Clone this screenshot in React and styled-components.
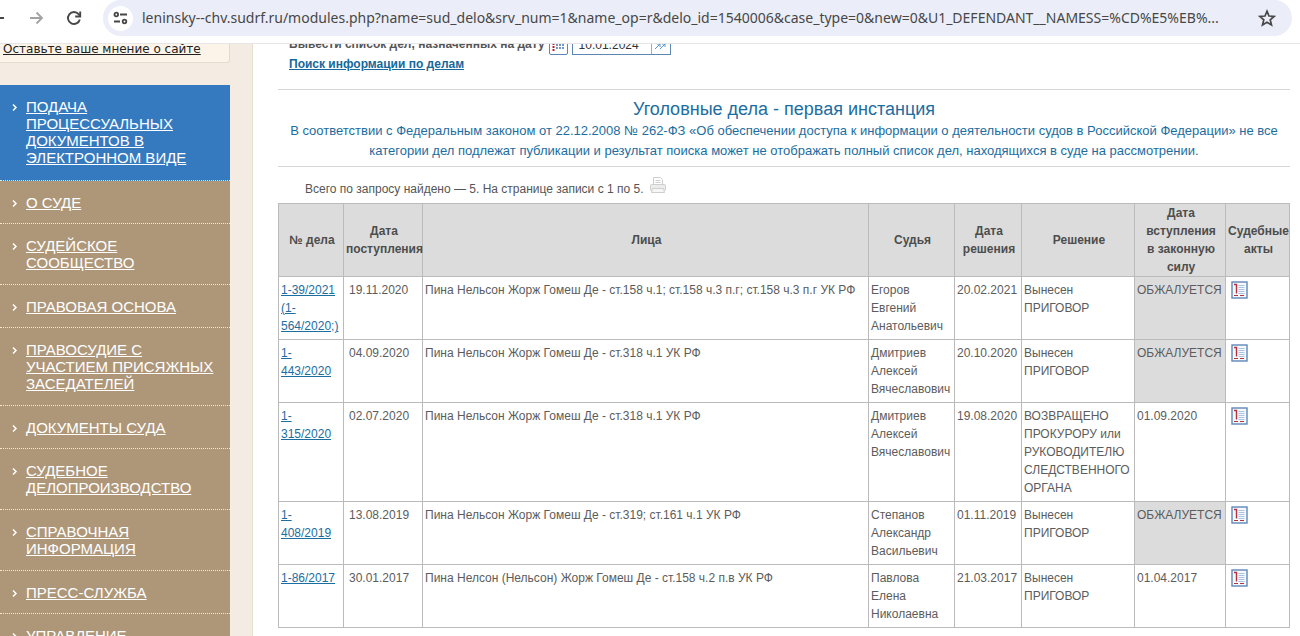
import React from "react";
import styled, { createGlobalStyle } from "styled-components";

const GlobalStyle = createGlobalStyle`
  * { box-sizing: border-box; }
  body {
    margin: 0;
    background: #fff;
    color: #555;
    font-family: "Liberation Sans", Arial, sans-serif;
    font-size: 12px;
    line-height: 18px;
  }
`;

const Window = styled.div`
  height: 100vh;
  display: flex;
  flex-direction: column;
  overflow: hidden;
`;

const Toolbar = styled.header`
  flex: none;
  height: 44px;
  display: flex;
  align-items: flex-start;
  padding-right: 8px;
  background: #fff;
  border-bottom: 1px solid #e6e6e6;
  position: relative;
  z-index: 1;
`;

const NavButtons = styled.div`
  display: flex;
  align-items: center;
  gap: 18px;
  width: 103px;
  height: 36px;
  margin-left: -12px;
  margin-right: 12px;
`;

const IconButton = styled.button`
  flex: none;
  display: flex;
  padding: 0;
  border: 0;
  background: none;
  color: ${(p) => p.$color || "#474747"};
`;

const AddressBar = styled.div`
  flex: 1;
  min-width: 0;
  height: 36px;
  display: flex;
  align-items: center;
  gap: 9px;
  padding: 0 16px 0 5px;
  border-radius: 18px;
  background: #ebeef8;
`;

const SiteInfo = styled(IconButton)`
  width: 25px;
  height: 25px;
  align-items: center;
  justify-content: center;
  border-radius: 50%;
  background: #fff;
`;

const Address = styled.input`
  flex: 1;
  min-width: 0;
  padding: 0;
  border: 0;
  outline: 0;
  background: none;
  color: #474747;
  font: 14px/24px "Noto Sans", "Open Sans", sans-serif;
  text-overflow: ellipsis;
`;

const Viewport = styled.div`
  flex: 1;
  min-height: 0;
  overflow: hidden;
  background: #fff;
`;

const Scrolled = styled.div`
  display: flex;
  align-items: stretch;
  margin-top: -15px;
`;

const Sidebar = styled.aside`
  flex: none;
  width: 253px;
  padding-right: 22px;
  background: #f4ebe2;
  border-right: 1px solid #eaded3;
`;

const Feedback = styled.div`
  height: 34px;
  padding: 11px 3px 0;
  margin-bottom: 22px;
  background: #fcf4e8;
  border: solid #e4dacf;
  border-width: 0 1px 1px 0;
  border-radius: 0 0 3px 0;
`;

const FeedbackLink = styled.a`
  color: #222;
  font-family: "DejaVu Sans", Verdana, sans-serif;
  font-size: 12px;
  white-space: nowrap;
`;

const Menu = styled.ul`
  margin: 0;
  padding: 0;
  list-style: none;
`;

const MenuItem = styled.li`
  display: flex;
  align-items: flex-start;
  gap: 8px;
  padding: 13px 12px ${(p) => (p.$active ? 14 : p.$compact ? 12 : 13)}px;
  background: ${(p) => (p.$active ? "#357abf" : "#ae9779")};
  border-bottom: 1px dotted #f0e8dc;
  color: #fff;
`;

const Arrow = styled.svg`
  flex: none;
  width: 6px;
  height: 17px;
`;

const MenuLink = styled.a`
  color: #fff;
  font-size: 15px;
  line-height: 17px;
  white-space: pre-line;
`;

const Main = styled.main`
  flex: 1;
  min-width: 0;
  padding: 2px 10px 8px 25px;
`;

const DateRow = styled.form`
  display: flex;
  align-items: flex-end;
  height: 24px;
  padding-left: 11px;
  gap: 4px;
`;

const DateLabel = styled.label`
  font-weight: bold;
  line-height: 22px;
`;

const CalendarButton = styled(IconButton)`
  width: 19px;
  height: 19px;
  align-items: center;
  justify-content: center;
  border: 1px solid #5d86b4;
  border-radius: 2px;
  background: #fff;
`;

const DateField = styled.div`
  display: flex;
  height: 21px;
  border: 1px solid #5d86b4;
`;

const DateInput = styled.input`
  width: 78px;
  padding: 0 0 0 6px;
  border: 0;
  outline: 0;
  color: #333;
  font: 12px/18px "Liberation Sans", Arial, sans-serif;
`;

const GoButton = styled(IconButton)`
  width: 19px;
  align-items: center;
  justify-content: center;
  border-left: 1px solid #8fb0d3;
`;

const SearchLink = styled.a`
  display: block;
  width: max-content;
  margin-left: 11px;
  color: #15689b;
  font-weight: bold;
`;

const Notice = styled.section`
  margin-top: 16px;
  padding: 8px 0 5px;
  border: solid #d6d6d6;
  border-width: 1px 0;
  color: #1c6da0;
  text-align: center;
`;

const Title = styled.h1`
  margin: 0;
  font-size: 18px;
  line-height: 23px;
  font-weight: normal;
`;

const Law = styled.p`
  margin: 0 12px;
  font-size: 13px;
  line-height: 20px;
`;

const Summary = styled.div`
  display: flex;
  align-items: center;
  gap: 5px;
  height: 36px;
  padding: 8px 0 0 27px;
`;

const Printer = styled(IconButton)`
  margin-bottom: 8px;
`;

const Cases = styled.table`
  width: 100%;
  table-layout: fixed;
  border-collapse: collapse;
  border: 1px solid #bbb;
`;

const Col = styled.col`
  width: ${(p) => (p.$w ? `${p.$w}px` : "auto")};
`;

const Th = styled.th`
  padding: 0 0 0 2px;
  border: 1px solid #bbb;
  background: #dcdcdc;
  color: #4d4d4d;
  font-weight: bold;
  text-align: center;
  vertical-align: middle;
  white-space: pre-line;
`;

const Td = styled.td`
  padding: 4px 0 4px ${(p) => p.$indent || 2}px;
  border: 1px solid #bbb;
  background: ${(p) => (p.$muted ? "#dcdcdc" : "#fff")};
  color: #5c5c5c;
  vertical-align: top;
  white-space: pre-line;
`;

const CaseLink = styled.a`
  color: #1c6da0;
`;

const ActIcon = () => (
  <svg width="17" height="18" viewBox="0 0 17 18" aria-hidden="true">
    <rect x="1" y="1" width="15" height="16" fill="#f6f9fd" stroke="#5f88b8" strokeWidth="1.400" />
    <path d="M7.500 4.500h6M7.500 6.500h6M7.500 8.500h6M7.500 10.500h6M7.500 12.500h6" stroke="#a9c3e3" />
    <path d="M3 3.500h2.500V12.500" fill="none" stroke="#b5303a" strokeWidth="1.400" />
    <path d="M3 14.500h4M9 14.500h4" stroke="#b5303a" />
  </svg>
);

const menu = [
  { text: "ПОДАЧА\nПРОЦЕССУАЛЬНЫХ\nДОКУМЕНТОВ В\nЭЛЕКТРОННОМ ВИДЕ", active: true },
  { text: "О СУДЕ" },
  { text: "СУДЕЙСКОЕ\nСООБЩЕСТВО" },
  { text: "ПРАВОВАЯ ОСНОВА" },
  { text: "ПРАВОСУДИЕ С\nУЧАСТИЕМ ПРИСЯЖНЫХ\nЗАСЕДАТЕЛЕЙ" },
  { text: "ДОКУМЕНТЫ СУДА" },
  { text: "СУДЕБНОЕ\nДЕЛОПРОИЗВОДСТВО" },
  { text: "СПРАВОЧНАЯ\nИНФОРМАЦИЯ" },
  { text: "ПРЕСС-СЛУЖБА" },
  { text: "УПРАВЛЕНИЕ" },
];

const columns = [
  { title: "№ дела", w: 65 },
  { title: "Дата\nпоступления", w: 79 },
  { title: "Лица" },
  { title: "Судья", w: 86 },
  { title: "Дата\nрешения", w: 67 },
  { title: "Решение", w: 113 },
  { title: "Дата\nвступления\nв законную\nсилу", w: 91 },
  { title: "Судебные\nакты", w: 64 },
];

const cases = [
  {
    id: "1-39/2021\n(1-\n564/2020;)",
    received: "19.11.2020",
    persons: "Пина Нельсон Жорж Гомеш Де - ст.158 ч.1; ст.158 ч.3 п.г; ст.158 ч.3 п.г УК РФ",
    judge: "Егоров Евгений Анатольевич",
    decided: "20.02.2021",
    decision: "Вынесен ПРИГОВОР",
  },
  {
    id: "1-\n443/2020",
    received: "04.09.2020",
    persons: "Пина Нельсон Жорж Гомеш Де - ст.318 ч.1 УК РФ",
    judge: "Дмитриев Алексей Вячеславович",
    decided: "20.10.2020",
    decision: "Вынесен ПРИГОВОР",
  },
  {
    id: "1-\n315/2020",
    received: "02.07.2020",
    persons: "Пина Нельсон Жорж Гомеш Де - ст.318 ч.1 УК РФ",
    judge: "Дмитриев Алексей Вячеславович",
    decided: "19.08.2020",
    decision: "ВОЗВРАЩЕНО ПРОКУРОРУ или РУКОВОДИТЕЛЮ СЛЕДСТВЕННОГО ОРГАНА",
    effective: "01.09.2020",
  },
  {
    id: "1-\n408/2019",
    received: "13.08.2019",
    persons: "Пина Нельсон Жорж Гомеш Де - ст.319; ст.161 ч.1 УК РФ",
    judge: "Степанов Александр Васильевич",
    decided: "01.11.2019",
    decision: "Вынесен ПРИГОВОР",
  },
  {
    id: "1-86/2017",
    received: "30.01.2017",
    persons: "Пина Нелсон (Нельсон) Жорж Гомеш Де - ст.158 ч.2 п.в УК РФ",
    judge: "Павлова\nЕлена\nНиколаевна",
    decided: "21.03.2017",
    decision: "Вынесен ПРИГОВОР",
    effective: "01.04.2017",
  },
];

export default function App() {
  return (
    <Window>
      <GlobalStyle />
      <Toolbar>
        <NavButtons>
          <IconButton aria-label="Назад">
            <svg width="20" height="20" viewBox="0 0 20 20" fill="none" stroke="currentColor" strokeWidth="1.8">
              <path d="M16 10H4M10 4l-6 6 6 6" />
            </svg>
          </IconButton>
          <IconButton aria-label="Вперёд" $color="#a3a3a3">
            <svg width="20" height="20" viewBox="0 0 20 20" fill="none" stroke="currentColor" strokeWidth="1.8">
              <path d="M4 10h12M10.500 4.500l5.500 5.500-5.500 5.500" />
            </svg>
          </IconButton>
          <IconButton aria-label="Обновить">
            <svg width="20" height="20" viewBox="0 0 20 20" fill="none" stroke="currentColor" strokeWidth="1.9">
              <path d="M15.800 11.500A6 6 0 1 1 14.600 6.200L16 7.600" />
              <path d="M16.200 3.500v5h-5" />
            </svg>
          </IconButton>
        </NavButtons>
        <AddressBar>
          <SiteInfo aria-label="Сведения о сайте">
            <svg width="15" height="14" viewBox="0 0 15 14" fill="none" stroke="currentColor" strokeWidth="1.8">
              <circle cx="3.300" cy="3.500" r="1.800" />
              <path d="M7 3.500h7M1 10.500h6" />
              <circle cx="11.500" cy="10.500" r="1.800" />
            </svg>
          </SiteInfo>
          <Address
            aria-label="Адрес"
            readOnly
            value="leninsky--chv.sudrf.ru/modules.php?name=sud_delo&srv_num=1&name_op=r&delo_id=1540006&case_type=0&new=0&U1_DEFENDANT__NAMESS=%CD%E5%EB%..."
          />
          <IconButton aria-label="Добавить в закладки">
            <svg width="18" height="18" viewBox="0 0 18 18" fill="none" stroke="currentColor" strokeWidth="1.700">
              <path d="M9 2.200l2 4.800 5.200.4-4 3.400 1.300 5.100L9 13.200l-4.500 2.700 1.300-5.100-4-3.400L7 7z" />
            </svg>
          </IconButton>
        </AddressBar>
      </Toolbar>

      <Viewport>
        <Scrolled>
          <Sidebar>
            <Feedback>
              <FeedbackLink href="#feedback">Оставьте ваше мнение о сайте</FeedbackLink>
            </Feedback>
            <Menu>
              {menu.map((item) => (
                <MenuItem key={item.text} $active={item.active} $compact={!item.text.includes("\n")}>
                  <Arrow viewBox="0 0 6 17" fill="none" stroke="currentColor" strokeWidth="1.5" aria-hidden="true">
                    <path d="M1 6.500l3 3-3 3" />
                  </Arrow>
                  <MenuLink href="#menu">{item.text}</MenuLink>
                </MenuItem>
              ))}
            </Menu>
          </Sidebar>

          <Main>
            <DateRow>
              <DateLabel htmlFor="date">Вывести список дел, назначенных на дату</DateLabel>
              <CalendarButton type="button" aria-label="Календарь">
                <svg width="13" height="11" viewBox="0 0 13 11" aria-hidden="true">
                  <path d="M1.500 0v11" stroke="#b5202b" strokeWidth="2" strokeDasharray="2 1" />
                  <path d="M5 1v9M8 1v9M11 1v9" stroke="#6f97c8" strokeWidth="2" strokeDasharray="2 1" />
                </svg>
              </CalendarButton>
              <DateField>
                <DateInput id="date" defaultValue="10.01.2024" />
                <GoButton type="button" aria-label="Показать">
                  <svg width="13" height="12" viewBox="0 0 13 12" fill="none" stroke="#5b95cf" aria-hidden="true">
                    <path d="M1 10l5-5M6 10l5-5M3 5h3v3M8 5h3v3" />
                  </svg>
                </GoButton>
              </DateField>
            </DateRow>
            <SearchLink href="#search">Поиск информации по делам</SearchLink>

            <Notice>
              <Title>Уголовные дела - первая инстанция</Title>
              <Law>
                В соответствии с Федеральным законом от 22.12.2008 № 262-ФЗ «Об обеспечении доступа к информации о
                деятельности судов в Российской Федерации» не все категории дел подлежат публикации и результат поиска
                может не отображать полный список дел, находящихся в суде на рассмотрении.
              </Law>
            </Notice>

            <Summary>
              <span>Всего по запросу найдено — 5. На странице записи с 1 по 5.</span>
              <Printer aria-label="Печать" $color="#cfcfcf">
                <svg width="18" height="18" viewBox="0 0 18 18" fill="none" stroke="currentColor" aria-hidden="true">
                  <path d="M4.500 8V1.500h7l2 2V8M6.500 4.500h5M6.500 6.500h5" />
                  <rect x="1.500" y="8.500" width="15" height="6" rx="1" fill="#ececec" />
                  <path d="M3.500 12.500h11l1 4h-13z" fill="#f6f6f6" />
                </svg>
              </Printer>
            </Summary>

            <Cases>
              <colgroup>
                {columns.map((c) => (
                  <Col key={c.title} $w={c.w} />
                ))}
              </colgroup>
              <thead>
                <tr>
                  {columns.map((c) => (
                    <Th key={c.title} scope="col">
                      {c.title}
                    </Th>
                  ))}
                </tr>
              </thead>
              <tbody>
                {cases.map((c) => (
                  <tr key={c.id}>
                    <Td>
                      <CaseLink href="#case">{c.id}</CaseLink>
                    </Td>
                    <Td $indent={5}>{c.received}</Td>
                    <Td>{c.persons}</Td>
                    <Td>{c.judge}</Td>
                    <Td>{c.decided}</Td>
                    <Td>{c.decision}</Td>
                    <Td $muted={!c.effective}>{c.effective || "ОБЖАЛУЕТСЯ"}</Td>
                    <Td $indent={5}>
                      <IconButton aria-label="Судебный акт">
                        <ActIcon />
                      </IconButton>
                    </Td>
                  </tr>
                ))}
              </tbody>
            </Cases>
          </Main>
        </Scrolled>
      </Viewport>
    </Window>
  );
}
